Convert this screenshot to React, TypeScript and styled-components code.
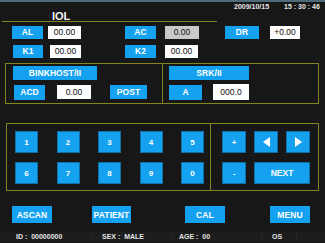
import styled, { createGlobalStyle } from "styled-components";

const GlobalStyle = createGlobalStyle`
	html, body {
		margin: 0;
		padding: 0;
		background: #171717;
	}
	* {
		box-sizing: border-box;
	}
`;

const OLIVE = "#85851f";
const BLUE = "#14a1ef";

const Screen = styled.div`
	width: 325px;
	height: 243px;
	display: flex;
	flex-direction: column;
	background: #171717;
	border-top: 2px solid #4d6b79;
	font-family: "Liberation Sans", Arial, sans-serif;
	overflow: hidden;
`;

const Header = styled.div`
	display: flex;
	height: 20px;
`;

const TitleBar = styled.div`
	width: 215px;
	margin-left: 2px;
	border-bottom: 1px solid ${OLIVE};
	padding: 4px 0 0 50px;
`;

const Title = styled.span`
	color: #f2f2f2;
	font-size: 11px;
	font-weight: 700;
	line-height: 12px;
`;

const Clock = styled.div`
	display: flex;
	gap: 15px;
	padding: 1px 0 0 17px;
	color: #e6e6e6;
	font-size: 7px;
	font-weight: 700;
	line-height: 8px;
	white-space: pre;
`;

const Row = styled.div<{ $mt: number }>`
	display: flex;
	align-items: center;
	margin-top: ${(p) => p.$mt}px;
	height: 14px;
`;

const Btn = styled.div<{ $w: number; $h?: number; $ml?: number }>`
	width: ${(p) => p.$w}px;
	height: ${(p) => p.$h ?? 13}px;
	margin-left: ${(p) => p.$ml ?? 0}px;
	flex-shrink: 0;
	display: flex;
	align-items: center;
	justify-content: center;
	background: ${BLUE};
	color: #fff;
	font-size: 8.5px;
	font-weight: 700;
	letter-spacing: 0.1px;
`;

const Input = styled.div<{ $w: number; $h?: number; $ml?: number; $gray?: boolean }>`
	width: ${(p) => p.$w}px;
	height: ${(p) => p.$h ?? 13}px;
	margin-left: ${(p) => p.$ml ?? 0}px;
	flex-shrink: 0;
	display: flex;
	align-items: center;
	justify-content: center;
	background: ${(p) => (p.$gray ? "#c9c9c9" : "#fdfdfd")};
	color: #111;
	font-size: 8.5px;
`;

const Box = styled.div<{ $mt: number; $ml: number; $w: number }>`
	display: flex;
	margin: ${(p) => p.$mt}px 0 0 ${(p) => p.$ml}px;
	width: ${(p) => p.$w}px;
	border: 1px solid ${OLIVE};
`;

const Panel = styled.div<{ $w?: number; $pad: string; $divider?: boolean }>`
	width: ${(p) => (p.$w ? `${p.$w}px` : "auto")};
	flex: ${(p) => (p.$w ? "none" : "1")};
	padding: ${(p) => p.$pad};
	border-right: ${(p) => (p.$divider ? `1px solid ${OLIVE}` : "none")};
	display: flex;
	flex-direction: column;
`;

const KeyRow = styled.div<{ $mt?: number }>`
	display: flex;
	justify-content: space-between;
	margin-top: ${(p) => p.$mt ?? 0}px;
`;

const Key = styled.div<{ $span?: number; $fs?: number }>`
	height: 22px;
	grid-column: span ${(p) => p.$span ?? 1};
	min-width: 23px;
	display: flex;
	align-items: center;
	justify-content: center;
	background: ${BLUE};
	border: 1px solid #0f6fa6;
	color: #fff;
	font-size: ${(p) => p.$fs ?? 8}px;
	font-weight: 700;
`;

const NavGrid = styled.div`
	display: grid;
	grid-template-columns: 24px 24px 24px;
	column-gap: 8px;
	row-gap: 9px;
`;

const Footer = styled.div`
	display: flex;
	margin-top: 15px;
	height: 17px;
`;

const StatusBar = styled.div`
	display: flex;
	margin-top: 9px;
	height: 10px;
	background: #1d1d1d;
	color: #e2e2e2;
	font-size: 7px;
	font-weight: 700;
	line-height: 10px;
	white-space: pre;
`;

const StatusCell = styled.div<{ $w: number; $pl: number }>`
	width: ${(p) => p.$w}px;
	padding-left: ${(p) => p.$pl}px;
	border-right: 1px solid #262626;
	flex-shrink: 0;
`;

function Arrow({ dir }: { dir: "left" | "right" }) {
	const pts = dir === "left" ? "8,0 8,10 1,5" : "1,0 1,10 8,5";
	return (
		<svg width="9" height="10" viewBox="0 0 9 10">
			<polygon points={pts} fill="#fff" />
		</svg>
	);
}

export default function App() {
	const topKeys = ["1", "2", "3", "4", "5"];
	const bottomKeys = ["6", "7", "8", "9", "0"];

	return (
		<>
			<GlobalStyle />
			<Screen>
				<Header>
					<TitleBar>
						<Title>IOL</Title>
					</TitleBar>
					<Clock>
						<span>2009/10/15</span>
						<span>15 : 30 : 46</span>
					</Clock>
				</Header>

				<Row $mt={3}>
					<Btn $w={31} $ml={12}>AL</Btn>
					<Input $w={33} $ml={5}>00.00</Input>
					<Btn $w={31} $ml={44}>AC</Btn>
					<Input $w={34} $ml={9} $gray>0.00</Input>
					<Btn $w={34} $ml={26}>DR</Btn>
					<Input $w={30} $ml={11}>+0.00</Input>
				</Row>
				<Row $mt={5}>
					<Btn $w={30} $ml={13}>K1</Btn>
					<Input $w={31} $ml={7}>00.00</Input>
					<Btn $w={31} $ml={44}>K2</Btn>
					<Input $w={33} $ml={9}>00.00</Input>
				</Row>

				<Box $mt={5} $ml={5} $w={314}>
					<Panel $w={157} $pad="2px 0 4px 7px" $divider>
						<Btn $w={84} $h={14}>BINKHOST/II</Btn>
						<Row $mt={5}>
							<Btn $w={31} $h={15} $ml={1}>ACD</Btn>
							<Input $w={34} $h={14} $ml={12}>0.00</Input>
							<Btn $w={37} $h={14} $ml={19}>POST</Btn>
						</Row>
					</Panel>
					<Panel $pad="2px 0 4px 6px">
						<Btn $w={80} $h={14}>SRK/II</Btn>
						<Row $mt={5}>
							<Btn $w={33} $h={15}>A</Btn>
							<Input $w={36} $h={16} $ml={11}>000.0</Input>
						</Row>
					</Panel>
				</Box>

				<Box $mt={19} $ml={6} $w={313}>
					<Panel $w={204} $pad="7px 6px 6px 8px" $divider>
						<KeyRow>
							{topKeys.map((k) => (
								<Key key={k}>{k}</Key>
							))}
						</KeyRow>
						<KeyRow $mt={9}>
							{bottomKeys.map((k) => (
								<Key key={k}>{k}</Key>
							))}
						</KeyRow>
					</Panel>
					<Panel $pad="7px 0 6px 11px">
						<NavGrid>
							<Key>+</Key>
							<Key>
								<Arrow dir="left" />
							</Key>
							<Key>
								<Arrow dir="right" />
							</Key>
							<Key>-</Key>
							<Key $span={2} $fs={8.5}>NEXT</Key>
						</NavGrid>
					</Panel>
				</Box>

				<Footer>
					<Btn $w={40} $h={17} $ml={12}>ASCAN</Btn>
					<Btn $w={39} $h={17} $ml={40}>PATIENT</Btn>
					<Btn $w={40} $h={17} $ml={54}>CAL</Btn>
					<Btn $w={40} $h={17} $ml={45}>MENU</Btn>
				</Footer>

				<StatusBar>
					<StatusCell $w={92} $pl={16}>ID :  00000000</StatusCell>
					<StatusCell $w={80} $pl={10}>SEX :  MALE</StatusCell>
					<StatusCell $w={90} $pl={7}>AGE :  00</StatusCell>
					<StatusCell $w={35} $pl={10}>OS</StatusCell>
				</StatusBar>
			</Screen>
		</>
	);
}
